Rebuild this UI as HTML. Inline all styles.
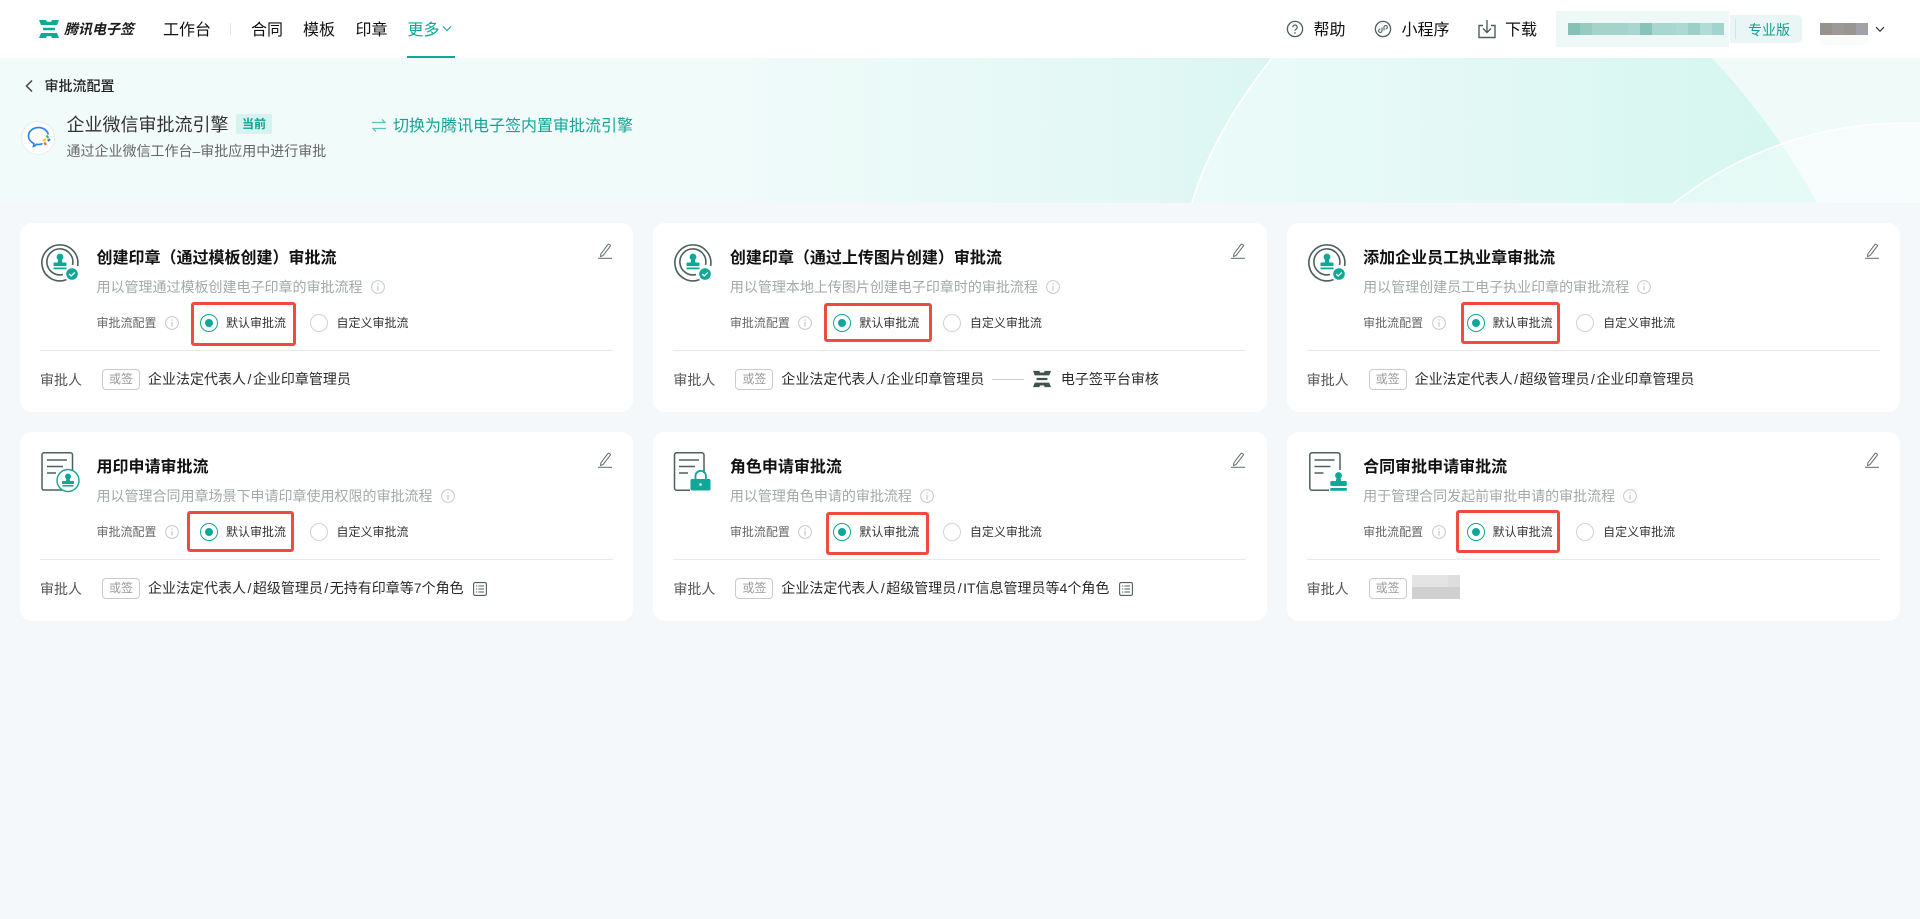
<!DOCTYPE html>
<html lang="zh-CN"><head><meta charset="utf-8"><title>审批流配置</title>
<style>
*{box-sizing:border-box}
html,body{margin:0;padding:0;width:1920px;height:919px;overflow:hidden;background:#f4f8fb;font-family:"Liberation Sans","Noto Sans CJK SC",sans-serif;color:#333}
.a{position:absolute;white-space:nowrap}
.hdr{position:absolute;left:0;top:0;width:1920px;height:58px;background:#fff}
.nav{font-size:16px;line-height:24px;top:18.500px;color:#111}
.card{position:absolute;width:613.33px;height:189px;background:#fff;border-radius:12px}
.t{left:76.500px;top:23.500px;font-size:16px;line-height:24px;font-weight:700;color:#111}
.d{left:76.500px;top:53px;font-size:14px;line-height:22px;color:#a3a8a8}
.d svg{display:inline-block;vertical-align:-2px;margin-left:8px}
.l{left:76.500px;top:91px;font-size:12px;line-height:18px;color:#666}
.i2{left:145px;top:93px}
.r1{left:180px;top:91px;width:18px;height:18px;border:1px solid #0fa898;border-radius:50%;background:#fff}
.r1:after{content:"";position:absolute;left:4px;top:4px;width:8px;height:8px;border-radius:50%;background:#0fa898}
.r2{left:289.500px;top:91px;width:18px;height:18px;border:1px solid #cfd3d3;border-radius:50%;background:#fff}
.rt1{left:206px;top:91px;font-size:12px;line-height:18px;color:#333}
.rt2{left:316.500px;top:91px;font-size:12px;line-height:18px;color:#333}
.box{position:absolute;border:3px solid #ef4b3e;border-radius:3px}
.hr{left:20px;top:127px;width:573px;height:1px;background:#e6eaea}
.w{left:20px;top:146px;font-size:14px;line-height:22px;color:#555}
.tag{left:82px;top:146px;width:38px;height:21px;border:1px solid #c9cccc;border-radius:4px;font-size:12px;line-height:19px;text-align:center;color:#999}
.v{left:128px;top:146px;font-size:14px;line-height:21px;color:#2b2b2b}
.v span{padding:0 1.500px}
.ed{left:577px;top:18.500px}
.ic{left:20px;top:20px}
</style></head><body>
<svg width="0" height="0" style="position:absolute">
<defs>
<symbol id="info" viewBox="0 0 14 14"><circle cx="7" cy="7" r="6.4" fill="none" stroke="#c4c9c9"/><path d="M7 3.4v1.4M7 6v4.6" stroke="#c4c9c9" stroke-width="1.2" fill="none"/></symbol>
<symbol id="edit" viewBox="0 0 16 18"><path d="M3.800 12 10.900 2.600a1 1 0 0 1 1.400-.2l.7.5a1 1 0 0 1 .2 1.400L6 13.600l-2.400.9z" fill="none" stroke="#5c6c69" stroke-width="1"/><path d="M1 16.300h14" stroke="#5c6c69" stroke-width="1"/></symbol>
<symbol id="list" viewBox="0 0 14 14"><rect x=".6" y=".6" width="12.8" height="12.8" rx="1.5" fill="none" stroke="#4e5f5c" stroke-width="1.1"/><path d="M3 4h1.2M5.4 4H11M3 7h1.2M5.4 7H11M3 10h1.2M5.4 10H11" stroke="#4e5f5c" stroke-width="1"/></symbol>
<symbol id="seal" viewBox="0 0 40 40">
<path d="M26.500 36.600A18 18 0 1 1 37.600 23" fill="none" stroke="#4d605d" stroke-width="1.600"/>
<path d="M23 31.500A13 13 0 1 1 32.500 22" fill="none" stroke="#4d605d" stroke-width="1.600"/>
<circle cx="20" cy="14" r="3.400" fill="#0fa898"/><path d="M18.400 15h3.200l.8 5h-4.800z" fill="#0fa898"/><rect x="13.500" y="19.500" width="13" height="3.600" rx=".8" fill="#0fa898"/><rect x="13.500" y="24.500" width="13" height="1.800" fill="#0fa898"/>
<circle cx="32" cy="31" r="7" fill="#fff"/><circle cx="32" cy="31" r="5.800" fill="#0fa898"/><path d="m29.200 31 2 2 3.600-3.600" fill="none" stroke="#fff" stroke-width="1.300"/>
</symbol>
<symbol id="doc1" viewBox="0 0 44 44">
<rect x="2" y=".8" width="30.500" height="37.200" rx="2" fill="none" stroke="#4d605d" stroke-width="1.500"/>
<path d="M7 8h20M7 14.500h16M7 21h9" stroke="#4d605d" stroke-width="1.500"/>
<circle cx="28" cy="28.500" r="11" fill="#fff" stroke="#0fa898" stroke-width="1.400"/>
<circle cx="28" cy="24.500" r="3" fill="#0fa898"/><path d="M26.600 25h2.800l.7 4.500h-4.200z" fill="#0fa898"/><rect x="22" y="29" width="12" height="3" rx=".7" fill="#0fa898"/><rect x="22.500" y="33" width="11" height="1.500" fill="#0fa898"/>
</symbol>
<symbol id="doc2" viewBox="0 0 44 44">
<path d="M31 21V3a2.200 2.200 0 0 0-2.200-2.200H3.700A2.200 2.200 0 0 0 1.500 3v33a2.200 2.200 0 0 0 2.200 2.200H17" fill="none" stroke="#4d605d" stroke-width="1.500"/>
<path d="M6 8h20M6 14.500h16M6 21h9" stroke="#4d605d" stroke-width="1.500"/>
<path d="M22.500 27v-3a5.200 5.200 0 0 1 10.400 0v3" fill="none" stroke="#0fa898" stroke-width="1.800"/>
<rect x="17.500" y="27" width="20" height="11.500" rx="1.500" fill="#0fa898"/><circle cx="27.500" cy="32.500" r="1.300" fill="#fff"/>
</symbol>
<symbol id="doc3" viewBox="0 0 44 44">
<path d="M33 18V3a2.200 2.200 0 0 0-2.200-2.200H5A2.200 2.200 0 0 0 2.800 3v33A2.200 2.200 0 0 0 5 38.200h17" fill="none" stroke="#4d605d" stroke-width="1.500"/>
<path d="M7.500 8h20M7.500 14.500h16M7.500 21h9" stroke="#4d605d" stroke-width="1.500"/>
<circle cx="31.500" cy="23.500" r="3.400" fill="#0fa898"/><path d="M29.800 24.500h3.400l1 5h-5.400z" fill="#0fa898"/><rect x="23.300" y="29" width="16.500" height="5" rx="1.200" fill="#0fa898"/><rect x="23.300" y="36" width="16.500" height="2.800" rx=".6" fill="#0fa898"/>
</symbol>
<symbol id="logo" viewBox="0 0 20 18"><path d="M0 0h20l-2 5H2zM4 7.800h12v2.400H4zM2 13h16l2 5H0z" fill="currentColor"/><path d="M7 0h6l-.8 1.800H7.800z" fill="#fff"/><path d="M7 18h6l-.8-1.800H7.800z" fill="#fff"/></symbol>
</defs></svg>

<!-- hero -->
<svg class="a" style="left:0;top:58px" width="1920" height="145" viewBox="0 58 1920 145">
<defs>
<linearGradient id="g0" x1="0" x2="1" y1="0" y2="0"><stop offset="0" stop-color="#f1fbfa"/><stop offset=".7" stop-color="#e3f8f5"/><stop offset="1" stop-color="#d9f6f2"/></linearGradient>
<linearGradient id="g1" x1="0" x2="1" y1="0" y2="0"><stop offset="0" stop-color="#ecfbf9"/><stop offset=".35" stop-color="#e5f9f6"/><stop offset="1" stop-color="#d4f6ef"/></linearGradient>
<linearGradient id="g2" x1="0" x2="1" y1="0" y2="0"><stop offset="0" stop-color="#fff" stop-opacity=".2"/><stop offset=".6" stop-color="#fff" stop-opacity=".55"/><stop offset="1" stop-color="#fff" stop-opacity=".5"/></linearGradient>
</defs>
<rect x="0" y="58" width="1920" height="145" fill="#f1fbfa"/>
<rect x="700" y="58" width="600" height="145" fill="url(#g0)"/>
<rect x="1300" y="58" width="620" height="145" fill="#f0fbf9"/>
<path d="M1192 203C1203 165 1225 118 1272 58H1712Q1775 125 1817 203Z" fill="url(#g1)"/>
<path d="M1192 203C1203 165 1225 118 1272 58" fill="none" stroke="#fff" stroke-width="1.800"/>
<circle cx="1905" cy="496" r="373" fill="url(#g2)" stroke="#fff" stroke-width="1.500"/>
</svg>

<div class="hdr"></div>
<svg class="a" style="left:39px;top:20px;color:#12a898" width="20" height="18"><use href="#logo"/></svg>
<div class="a" style="left:64px;top:18px;font-size:14px;line-height:22px;font-weight:700;font-style:italic;color:#1a1a1a">腾讯电子签</div>
<div class="a nav" style="left:163px">工作台</div>
<div class="a" style="left:230px;top:23px;width:1px;height:12px;background:#e3e6e6"></div>
<div class="a nav" style="left:251px">合同</div>
<div class="a nav" style="left:303px">模板</div>
<div class="a nav" style="left:355.500px">印章</div>
<div class="a nav" style="left:407.500px;color:#12a594">更多</div>
<svg class="a" style="left:442px;top:25px" width="10" height="7" viewBox="0 0 10 7"><path d="m1 1.500 4 4 4-4" fill="none" stroke="#12a594" stroke-width="1.100"/></svg>
<div class="a" style="left:407px;top:56px;width:48px;height:2px;background:#0fa898"></div>

<svg class="a" style="left:1286px;top:20px" width="18" height="18" viewBox="0 0 18 18"><circle cx="9" cy="9" r="7.600" fill="none" stroke="#4d605d" stroke-width="1.300"/><path d="M6.800 7.200a2.200 2.200 0 1 1 3.300 1.900c-.8.500-1.100.9-1.100 1.700" fill="none" stroke="#4d605d" stroke-width="1.200"/><circle cx="9" cy="12.900" r=".8" fill="#4d605d"/></svg>
<div class="a nav" style="left:1313.500px">帮助</div>
<svg class="a" style="left:1374px;top:20px" width="18" height="18" viewBox="0 0 18 18"><circle cx="9" cy="9" r="7.600" fill="none" stroke="#4d605d" stroke-width="1.300"/><path d="M8 7.500v3.300a1.700 1.700 0 1 1-1.700-1.700M10 10.500V7.200a1.700 1.700 0 1 1 1.700 1.700" fill="none" stroke="#4d605d" stroke-width="1.100"/></svg>
<div class="a nav" style="left:1401.500px">小程序</div>
<svg class="a" style="left:1477px;top:19px" width="20" height="20" viewBox="0 0 20 20"><path d="M6 6.500H2v12h16v-12h-4" fill="none" stroke="#4d605d" stroke-width="1.400"/><path d="M10 1v12M6 9.500l4 4 4-4" fill="none" stroke="#4d605d" stroke-width="1.400"/></svg>
<div class="a nav" style="left:1505px">下载</div>

<div class="a" style="left:1556px;top:11px;width:173px;height:36px;background:#eef8f7"></div>
<div class="a" style="left:1568px;top:23px;width:156px;height:12px;background:linear-gradient(90deg,#85c2b6 0 12px,#96cbc0 12px 24px,#a5d3ca 24px 60px,#abd6cf 60px 72px,#86c3b9 72px 84px,#a9d6cf 84px 108px,#aed8d1 108px 120px,#9cd0c7 120px 132px,#b2dbd3 132px 144px,#a2d4cd 144px 156px)"></div>
<div class="a" style="left:1730px;top:15px;width:72px;height:28px;background:#e9f6f5;border-radius:0 5px 5px 0"></div>
<div class="a" style="left:1735px;top:19px;width:1px;height:20px;background:#d3e8e5"></div>
<div class="a" style="left:1748px;top:19px;font-size:14px;line-height:22px;color:#12a090">专业版</div>
<div class="a" style="left:1820px;top:23px;width:48px;height:12px;background:linear-gradient(90deg,#98928d 0 12px,#9c9a98 12px 24px,#989592 24px 36px,#a1a2a9 36px 48px)"></div>
<div class="a" style="left:1820px;top:35px;width:48px;height:10px;background:#fafbfb"></div>
<svg class="a" style="left:1875px;top:26px" width="10" height="7" viewBox="0 0 10 7"><path d="m1 1.200 4 4 4-4" fill="none" stroke="#333" stroke-width="1.200"/></svg>

<svg class="a" style="left:24px;top:79px" width="10" height="14" viewBox="0 0 10 14"><path d="M8 1.500 2.500 7 8 12.500" fill="none" stroke="#444" stroke-width="1.500"/></svg>
<div class="a" style="left:44.500px;top:75px;font-size:14px;line-height:22px;font-weight:500;color:#222">审批流配置</div>

<svg class="a" style="left:21px;top:121px" width="34" height="34" viewBox="0 0 34 34"><circle cx="17" cy="17" r="16.500" fill="#fff" stroke="#e6eeec"/><path d="M21.500 22.700a10 10 0 0 1-4 .8c-.6 0-1.400 0-2-.2-.8 1-1.900 1.700-3 2 .3-1 .4-1.900.3-2.800C9.800 21 7.500 18.200 7.500 15c0-4.700 4.500-8.500 10-8.500 5 0 9 3 9.800 7" fill="none" stroke="#2b83f0" stroke-width="1.700"/><path d="m22 20 3-2" stroke="#f7c52b" stroke-width="2.200"/><path d="m25.500 14.500 1.800 2.500" stroke="#3dbb5c" stroke-width="2.200"/><path d="m29 18-2.200 2" stroke="#2b83f0" stroke-width="2.200"/><path d="m25 24-1.700-2.600" stroke="#ef6b2c" stroke-width="2.200"/></svg>
<div class="a" style="left:66.500px;top:112px;font-size:18px;line-height:26px;color:#333">企业微信审批流引擎</div>
<div class="a" style="left:236px;top:114px;width:36px;height:20px;background:#d6f4ef;border-radius:2px;font-size:12px;line-height:20px;text-align:center;font-weight:700;color:#12a594">当前</div>
<svg class="a" style="left:371px;top:118px" width="16" height="15" viewBox="0 0 16 15"><path d="M1 4.500h13L11 1.500M15 10.500H2L5 13.500" fill="none" stroke="#5fc2b6" stroke-width="1.300"/></svg>
<div class="a" style="left:393px;top:115px;font-size:16px;line-height:24px;color:#12a594">切换为腾讯电子签内置审批流引擎</div>
<div class="a" style="left:66.500px;top:140px;font-size:14px;line-height:22px;color:#666">通过企业微信工作台–审批应用中进行审批</div>

<!-- card 1 -->
<div class="card" style="left:20px;top:223px">
<svg class="a ic" width="40" height="40"><use href="#seal"/></svg>
<div class="a t">创建印章（通过模板创建）审批流</div>
<div class="a d">用以管理通过模板创建电子印章的审批流程<svg width="14" height="14"><use href="#info"/></svg></div>
<svg class="a ed" width="16" height="18"><use href="#edit"/></svg>
<div class="a l">审批流配置</div><svg class="a i2" width="14" height="14"><use href="#info"/></svg>
<div class="box" style="left:171px;top:79px;width:105px;height:44px"></div>
<div class="a r1"></div><div class="a rt1">默认审批流</div>
<div class="a r2"></div><div class="a rt2">自定义审批流</div>
<div class="a hr"></div>
<div class="a w">审批人</div><div class="a tag">或签</div>
<div class="a v">企业法定代表人<span>/</span>企业印章管理员</div>
</div>

<!-- card 2 -->
<div class="card" style="left:653.330px;top:223px">
<svg class="a ic" width="40" height="40"><use href="#seal"/></svg>
<div class="a t">创建印章（通过上传图片创建）审批流</div>
<div class="a d">用以管理本地上传图片创建电子印章时的审批流程<svg width="14" height="14"><use href="#info"/></svg></div>
<svg class="a ed" width="16" height="18"><use href="#edit"/></svg>
<div class="a l">审批流配置</div><svg class="a i2" width="14" height="14"><use href="#info"/></svg>
<div class="box" style="left:171px;top:80px;width:108px;height:39px"></div>
<div class="a r1"></div><div class="a rt1">默认审批流</div>
<div class="a r2"></div><div class="a rt2">自定义审批流</div>
<div class="a hr"></div>
<div class="a w">审批人</div><div class="a tag">或签</div>
<div class="a v">企业法定代表人<span>/</span>企业印章管理员</div>
<div class="a" style="left:339px;top:156px;width:32px;height:1px;background:#c9cfce"></div>
<svg class="a" style="left:380px;top:147px;color:#3f5450" width="18" height="18"><use href="#logo"/></svg>
<div class="a v" style="left:407.500px">电子签平台审核</div>
</div>

<!-- card 3 -->
<div class="card" style="left:1286.670px;top:223px">
<svg class="a ic" width="40" height="40"><use href="#seal"/></svg>
<div class="a t">添加企业员工执业章审批流</div>
<div class="a d">用以管理创建员工电子执业印章的审批流程<svg width="14" height="14"><use href="#info"/></svg></div>
<svg class="a ed" width="16" height="18"><use href="#edit"/></svg>
<div class="a l">审批流配置</div><svg class="a i2" width="14" height="14"><use href="#info"/></svg>
<div class="box" style="left:174px;top:79px;width:99px;height:42px"></div>
<div class="a r1"></div><div class="a rt1">默认审批流</div>
<div class="a r2"></div><div class="a rt2">自定义审批流</div>
<div class="a hr"></div>
<div class="a w">审批人</div><div class="a tag">或签</div>
<div class="a v">企业法定代表人<span>/</span>超级管理员<span>/</span>企业印章管理员</div>
</div>

<!-- card 4 -->
<div class="card" style="left:20px;top:432px">
<svg class="a ic" width="44" height="44"><use href="#doc1"/></svg>
<div class="a t">用印申请审批流</div>
<div class="a d">用以管理合同用章场景下申请印章使用权限的审批流程<svg width="14" height="14"><use href="#info"/></svg></div>
<svg class="a ed" width="16" height="18"><use href="#edit"/></svg>
<div class="a l">审批流配置</div><svg class="a i2" width="14" height="14"><use href="#info"/></svg>
<div class="box" style="left:166.500px;top:79px;width:107px;height:41px"></div>
<div class="a r1"></div><div class="a rt1">默认审批流</div>
<div class="a r2"></div><div class="a rt2">自定义审批流</div>
<div class="a hr"></div>
<div class="a w">审批人</div><div class="a tag">或签</div>
<div class="a v">企业法定代表人<span>/</span>超级管理员<span>/</span>无持有印章等7个角色</div>
<svg class="a" style="left:453px;top:150px" width="14" height="14"><use href="#list"/></svg>
</div>

<!-- card 5 -->
<div class="card" style="left:653.330px;top:432px">
<svg class="a ic" width="44" height="44"><use href="#doc2"/></svg>
<div class="a t">角色申请审批流</div>
<div class="a d">用以管理角色申请的审批流程<svg width="14" height="14"><use href="#info"/></svg></div>
<svg class="a ed" width="16" height="18"><use href="#edit"/></svg>
<div class="a l">审批流配置</div><svg class="a i2" width="14" height="14"><use href="#info"/></svg>
<div class="box" style="left:173px;top:80px;width:103px;height:43px"></div>
<div class="a r1"></div><div class="a rt1">默认审批流</div>
<div class="a r2"></div><div class="a rt2">自定义审批流</div>
<div class="a hr"></div>
<div class="a w">审批人</div><div class="a tag">或签</div>
<div class="a v">企业法定代表人<span>/</span>超级管理员<span>/</span>IT信息管理员等4个角色</div>
<svg class="a" style="left:466px;top:150px" width="14" height="14"><use href="#list"/></svg>
</div>

<!-- card 6 -->
<div class="card" style="left:1286.670px;top:432px">
<svg class="a ic" width="44" height="44"><use href="#doc3"/></svg>
<div class="a t">合同审批申请审批流</div>
<div class="a d">用于管理合同发起前审批申请的审批流程<svg width="14" height="14"><use href="#info"/></svg></div>
<svg class="a ed" width="16" height="18"><use href="#edit"/></svg>
<div class="a l">审批流配置</div><svg class="a i2" width="14" height="14"><use href="#info"/></svg>
<div class="box" style="left:169px;top:78px;width:104px;height:43px"></div>
<div class="a r1"></div><div class="a rt1">默认审批流</div>
<div class="a r2"></div><div class="a rt2">自定义审批流</div>
<div class="a hr"></div>
<div class="a w">审批人</div><div class="a tag">或签</div>
<div class="a" style="left:125px;top:143px;width:48px;height:12px;background:linear-gradient(90deg,#e4e4e4 0 36px,#dedede 36px 48px)"></div>
<div class="a" style="left:125px;top:155px;width:48px;height:12px;background:#d0d0d0"></div>
</div>
</body></html>
